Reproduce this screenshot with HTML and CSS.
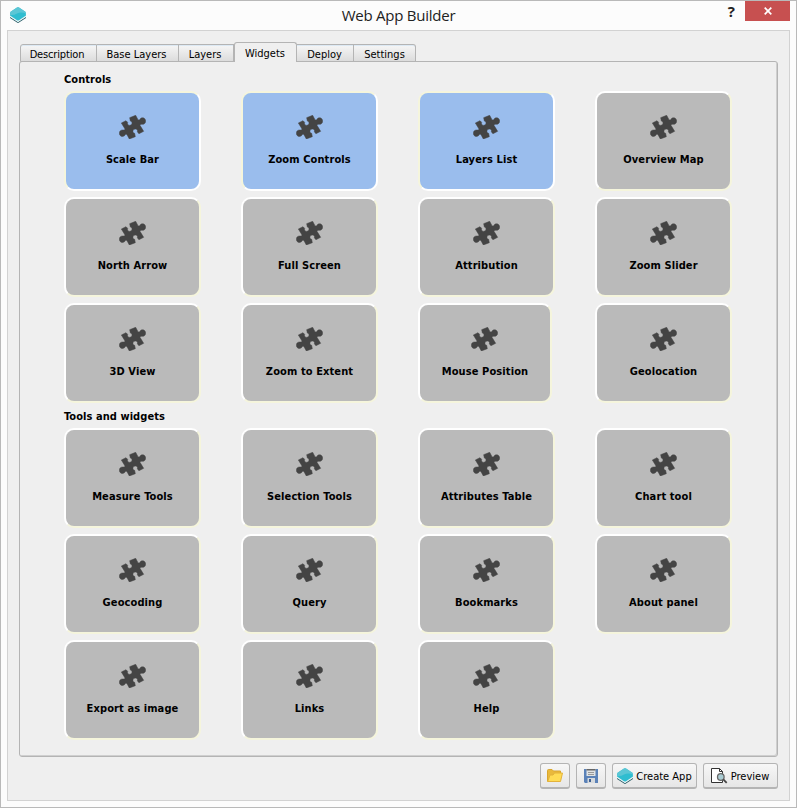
FILE: index.html
```html
<!DOCTYPE html>
<html lang="en">
<head>
<meta charset="utf-8">
<title>Web App Builder</title>
<link rel="stylesheet" href="styles.css">
</head>
<body>
<svg class="defs" width="0" height="0">
  <symbol id="puzzle" viewBox="26 28 81 72"><path fill="#444" stroke="#444" stroke-width="1.5" stroke-linejoin="round" d="M33 52L47 45L52 50C50 56 54 60 59 59C64 58 67 53 64 48L60 46L58 36L76 29L83 42C86 44 88 43 89 41C92 35 102 35 105 42C108 50 103 56 96 56C92 56 89 56 89 59L100 77L86 84L81 79C83 73 79 69 74 70C69 71 66 76 69 81L73 83L75 93L57 100L50 87C47 85 45 86 44 88C41 94 31 94 28 87C25 79 30 73 37 73C41 73 44 73 44 70Z"/></symbol>
  <symbol id="layers" viewBox="0 0 16 16"><path fill="#2b5f69" d="M0 9.5L8 15L16 9.5V11L8.6 15.8Q8 16.1 7.4 15.8L0 11Z"/><path fill="#e8f4f5" d="M0 8L8 13.6L16 8V10L8 15L0 10Z"/><path fill="#2fbdd0" d="M.6 4.8L7 .5Q8 -.1 9 .5L15.4 4.8Q16 5.4 16 8.6L9 13.2Q8 13.8 7 13.2L0 8.6Q0 5.4 .6 4.8Z"/><path fill="#5bc6d5" d="M.6 4.8L7 .5Q8 -.1 9 .5L15.4 4.8L15.9 6.5Q11 4.5 7 6.5Q4 8.5 0 8Z"/></symbol>
</svg>
<div class="window">
  <header class="titlebar">
    <svg class="logo"><use href="#layers"/></svg>
    <h1>Web App Builder</h1>
    <span class="help">?</span>
    <span class="close"><svg width="8" height="8" viewBox="0 0 8 8"><path d="M.7 .7L7.3 7.3M7.3 .7L.7 7.3" stroke="#fff" stroke-width="1.7"/></svg></span>
  </header>
  <main class="client">
    <nav class="tabs">
      <span class="tab t1">Description</span><span class="tab t2">Base Layers</span><span class="tab t3">Layers</span><span class="tab t4 active">Widgets</span><span class="tab t5">Deploy</span><span class="tab t6">Settings</span>
    </nav>
    <section class="panel">
      <h2>Controls</h2>
      <div class="grid">
        <div class="card on"><svg><use href="#puzzle"/></svg><b>Scale Bar</b></div>
        <div class="card on"><svg><use href="#puzzle"/></svg><b>Zoom Controls</b></div>
        <div class="card on"><svg><use href="#puzzle"/></svg><b>Layers List</b></div>
        <div class="card"><svg><use href="#puzzle"/></svg><b>Overview Map</b></div>
        <div class="card"><svg><use href="#puzzle"/></svg><b>North Arrow</b></div>
        <div class="card"><svg><use href="#puzzle"/></svg><b>Full Screen</b></div>
        <div class="card"><svg><use href="#puzzle"/></svg><b>Attribution</b></div>
        <div class="card"><svg><use href="#puzzle"/></svg><b>Zoom Slider</b></div>
        <div class="card"><svg><use href="#puzzle"/></svg><b>3D View</b></div>
        <div class="card"><svg><use href="#puzzle"/></svg><b>Zoom to Extent</b></div>
        <div class="card narrow"><svg><use href="#puzzle"/></svg><b>Mouse Position</b></div>
        <div class="card"><svg><use href="#puzzle"/></svg><b>Geolocation</b></div>
      </div>
      <h2>Tools and widgets</h2>
      <div class="grid">
        <div class="card"><svg><use href="#puzzle"/></svg><b>Measure Tools</b></div>
        <div class="card"><svg><use href="#puzzle"/></svg><b>Selection Tools</b></div>
        <div class="card"><svg><use href="#puzzle"/></svg><b>Attributes Table</b></div>
        <div class="card"><svg><use href="#puzzle"/></svg><b>Chart tool</b></div>
        <div class="card"><svg><use href="#puzzle"/></svg><b>Geocoding</b></div>
        <div class="card"><svg><use href="#puzzle"/></svg><b>Query</b></div>
        <div class="card"><svg><use href="#puzzle"/></svg><b>Bookmarks</b></div>
        <div class="card"><svg><use href="#puzzle"/></svg><b>About panel</b></div>
        <div class="card"><svg><use href="#puzzle"/></svg><b>Export as image</b></div>
        <div class="card"><svg><use href="#puzzle"/></svg><b>Links</b></div>
        <div class="card"><svg><use href="#puzzle"/></svg><b>Help</b></div>
      </div>
    </section>
    <footer class="actions">
      <button class="btn icon"><svg width="16" height="13" viewBox="0 0 16 13"><path d="M.5 12.5V1.5Q.5.5 1.5.5H5L6.5 2H13.5V4" fill="#e9b93c" stroke="#d9a62e"/><path d="M.7 12.5L3 6H6L7.5 4H15.5L13.5 12.5Z" fill="#ffdc55" stroke="#e3b23b"/></svg></button>
      <button class="btn icon"><svg width="14" height="14" viewBox="0 0 14 14"><path d="M0 0H14V14H1L0 13Z" fill="#5b82b8"/><path d="M2.5 0H11.5V7H2.5Z" fill="#dfe2e4"/><path d="M2.5 0H11.5V1.5H2.5Z" fill="#666"/><path d="M4 3.5H10M4 5.5H10" stroke="#999"/><path d="M3.5 9H11V14H3.5Z" fill="#d5d9dd"/><path d="M5 10H7V13H5Z" fill="#3e5f91"/></svg></button>
      <button class="btn create"><svg width="16" height="16"><use href="#layers"/></svg><span>Create App</span></button>
      <button class="btn preview"><svg width="17" height="16" viewBox="0 0 17 16"><path d="M.5.5H8.5L11.5 3.5V14.5H.5Z" fill="#fff" stroke="#333"/><path d="M8.5.5V3.5H11.5" fill="none" stroke="#333"/><circle cx="9.8" cy="9" r="3.3" fill="#a9cbd2" stroke="#666" stroke-width="1.3"/><path d="M12.3 11.3L15.7 14.8" stroke="#444" stroke-width="1.8"/></svg><span>Preview</span></button>
    </footer>
  </main>
</div>
</body>
</html>
```
FILE: styles.css
```css
* { box-sizing: border-box; }
body { margin: 0; font: 11px/14px "DejaVu Sans Condensed", "DejaVu Sans", sans-serif; font-stretch: condensed; color: #000; }
.defs { display: none; }
.window { width: 797px; height: 808px; background: #fcfcfc; border: 1px solid #b9b9b9; padding: 0 6px 6px; }
.titlebar { height: 29px; display: grid; grid-template-columns: 45px 1fr 45px; align-items: start; position: relative; }
.logo { width: 16px; height: 16px; margin: 6px 0 0 3px; }
h1 { margin: 3px 0 0 0; font: 15px/22px "Open Sans", sans-serif; letter-spacing: -0.25px; text-align: center; color: #222; grid-column: 2; }
.help { position: absolute; right: 55px; top: 0; font: bold 15px/20px "Open Sans", sans-serif; color: #222; }
.close { width: 45px; height: 20px; background: #c75050; display: flex; align-items: center; justify-content: center; }
.client { height: 771px; background: #efefef; border: 1px solid #d2d2d2; padding: 11px 12px 0 11px; }
.tabs { display: flex; align-items: flex-end; height: 20px; margin-bottom: -1px; padding-left: 1px; position: relative; }
.tab { height: 18px; border: 1px solid #b4b4b4; border-left-width: 0; background: linear-gradient(#f6f6f6, #dcdcdc); text-align: center; line-height: 19px; white-space: nowrap; box-shadow: inset 0 1px #dce9f4; }
.t1 { width: 77px; border-left-width: 1px; border-radius: 3px 0 0 0; padding-right: 3px; letter-spacing: -0.15px; }
.t2 { width: 82px; padding-right: 2px; }
.t3 { width: 55px; padding-right: 2px; }
.t4 { width: 63px; }
.t5 { width: 57px; padding-right: 1px; }
.t6 { width: 62px; border-radius: 0 3px 0 0; }
.tab.active { height: 20px; background: #efefef; border: 1px solid #b4b4b4; border-bottom: 0; border-radius: 3px 3px 0 0; box-shadow: none; line-height: 21px; padding-right: 1px; }
.panel { height: 696px; width: 759px; border: 1px solid #b4b4b4; box-shadow: inset -1px -1px #cfcfcf; border-radius: 3px; padding: 10px 0 0 44px; }
h2 { margin: 0; height: 19px; font-size: 11px; line-height: 16px; font-weight: bold; letter-spacing: 0.06px; }
.grid { display: grid; grid-template-columns: repeat(4, 137px); grid-auto-rows: 100px; gap: 6px 40px; }
.grid + h2 { margin-top: 6px; }
.card { border: 2px solid; border-color: #fff #f5f5dc #f5f5dc #fff; border-radius: 10px; background: #bababa; display: flex; flex-direction: column; align-items: center; padding: 22px 0 0 0; }
.card.on { background: #9abded; border-color: #f5f5dc #fff #fff #f5f5dc; }
.card.narrow { width: 134px; }
.card svg { width: 27px; height: 24px; display: block; margin-right: 1px; }
.card b { margin-top: 14px; line-height: 14px; white-space: nowrap; letter-spacing: 0.1px; }
.actions { display: flex; gap: 6px; justify-content: flex-end; margin-top: 6px; margin-right: -1px; }
.btn { height: 26px; padding: 0; border: 1px solid #b4b4b4; border-bottom-width: 2px; border-radius: 3px; background: linear-gradient(#f7f7f7, #e6e6e6); font: inherit; color: #000; display: flex; align-items: center; justify-content: center; white-space: nowrap; }
.btn span { padding-top: 2px; }
.icon { width: 30px; }
.create { width: 85px; gap: 3px; }
.preview { width: 75px; gap: 3px; padding-right: 1px; }
```
